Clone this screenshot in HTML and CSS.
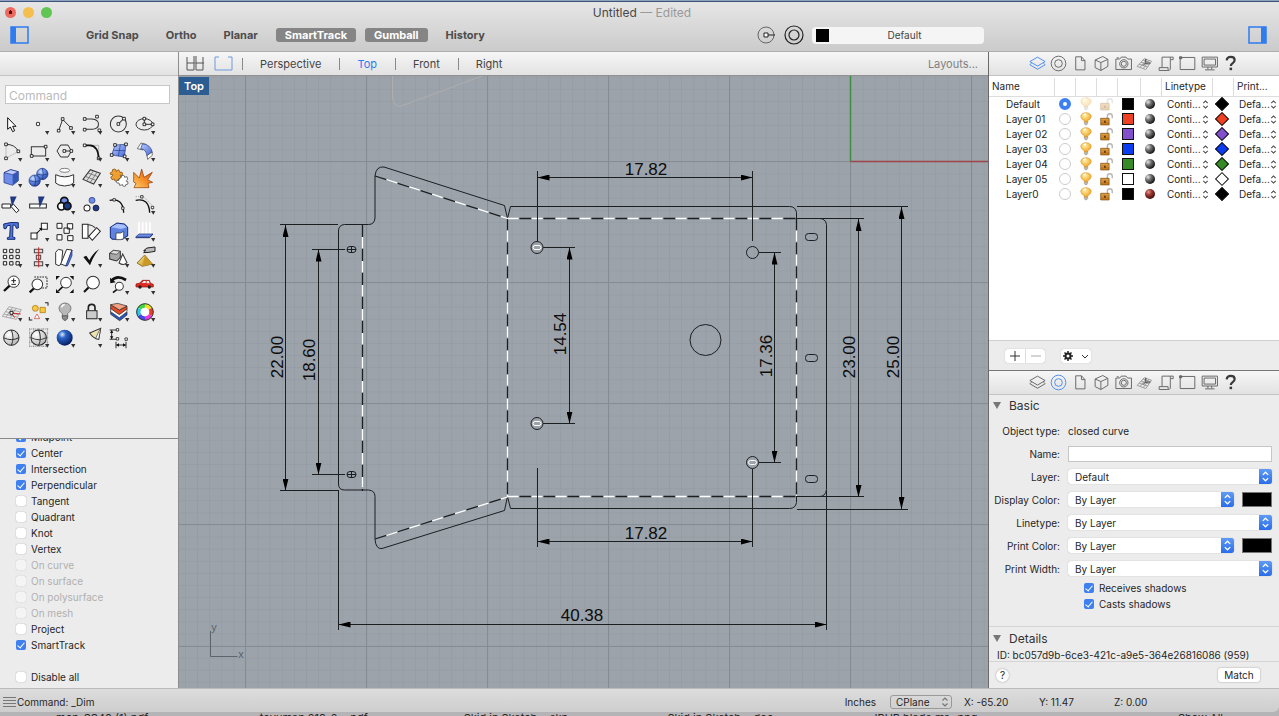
FILE: index.html
```html
<!DOCTYPE html>
<html lang="en">
<head>
    <meta charset="UTF-8">
    <meta name="viewport" content="width=device-width, initial-scale=1.0">
    <title>Untitled</title>
    <link rel="stylesheet" href="styles.css">
</head>
<body>

    <!-- Shared symbols -->
    <svg class="defs" width="0" height="0" aria-hidden="true">
        <defs>
            <linearGradient id="blue" x1="0" y1="0" x2="1" y2="1"><stop offset="0" stop-color="#b9cbff"/><stop offset="1" stop-color="#4468d0"/></linearGradient>
            <linearGradient id="fire" x1="1" y1="0" x2="0" y2="1"><stop offset="0" stop-color="#d8500c"/><stop offset=".5" stop-color="#f58a22"/><stop offset="1" stop-color="#ffd070"/></linearGradient>
            <linearGradient id="gold" x1="0" y1="0" x2="1" y2="1"><stop offset="0" stop-color="#ffe88a"/><stop offset="1" stop-color="#b98a1a"/></linearGradient>
            <radialGradient id="ball" cx=".35" cy=".3" r=".75"><stop offset="0" stop-color="#cfe0ff"/><stop offset=".4" stop-color="#6d95e8"/><stop offset="1" stop-color="#2748a8"/></radialGradient>
            <radialGradient id="deep" cx=".35" cy=".3" r=".75"><stop offset="0" stop-color="#e0ecff"/><stop offset=".3" stop-color="#2c66c8"/><stop offset="1" stop-color="#031a5c"/></radialGradient>
            <radialGradient id="grey" cx=".35" cy=".3" r=".75"><stop offset="0" stop-color="#fff"/><stop offset="1" stop-color="#b5b5b5"/></radialGradient>
            <radialGradient id="dark" cx=".3" cy=".3" r=".75"><stop offset="0" stop-color="#e8e8e8"/><stop offset=".4" stop-color="#777"/><stop offset="1" stop-color="#111"/></radialGradient>
            <radialGradient id="red" cx=".35" cy=".3" r=".75"><stop offset="0" stop-color="#e59a90"/><stop offset=".4" stop-color="#9c3a32"/><stop offset="1" stop-color="#3a0a08"/></radialGradient>
            <radialGradient id="glow" cx=".4" cy=".3" r=".7"><stop offset="0" stop-color="#fff0a8"/><stop offset="1" stop-color="#f0a020"/></radialGradient>
        </defs>
        <symbol id="more" viewBox="0 0 80 80"><path d="M54 57h13l-6 11z" fill="#333"/></symbol>
        <symbol id="n" viewBox="0 0 10 10" overflow="visible"><path d="M1 1h8v8h-8z" fill="#fff" stroke="#111" stroke-width="2.5"/></symbol>
        <symbol id="updown" viewBox="0 0 8 12"><path d="M1.500 4.500L4 2l2.500 2.500M1.500 7.500L4 10l2.500-2.500" fill="none" stroke="currentColor" stroke-width="1.200"/></symbol>
        <symbol id="bulb" viewBox="0 0 36 40"><path d="M3 13a15 11 0 1 1 30 0q0 6-10 12v4h-10v-4q-10-6-10-12z" fill="url(#glow)" stroke="#d08a18" stroke-width="1.500"/><path d="M13 29h10v4l-3 4h-4l-3-4z" fill="#bcb7ae" stroke="#8d8778"/><path d="M11 9q2-3 7-3" stroke="#fff" stroke-width="3" fill="none"/></symbol>
        <symbol id="lock" viewBox="0 0 40 40"><path d="M21 20v-8q0-7 7-7t7 7v6" fill="none" stroke="#b6b6b6" stroke-width="4"/><path d="M2 18h24v19H2z" fill="#c67c1e" stroke="#7d4a0c" stroke-width="2"/><path d="M3 21h22M3 26h22" stroke="#e8b060" stroke-width="2"/><path d="M12 25h4v6h-4z" fill="#3c2204"/></symbol>

        <!-- Panel tabs -->
        <symbol id="t-layers" viewBox="0 0 66 66"><path d="M9 27L33 13l24 14-24 14z"/><path d="M14 32l-5 5 24 14 24-14-5-5"/></symbol>
        <symbol id="t-target" viewBox="0 0 66 66"><circle cx="33" cy="33" r="23"/><circle cx="33" cy="33" r="12"/></symbol>
        <symbol id="t-page" viewBox="0 0 66 66"><path d="M18 12h18l11 12v29H18zM36 12v12h11"/></symbol>
        <symbol id="t-box" viewBox="0 0 66 66"><path d="M13 22l24-11 16 9v22L31 55l-18-9zM13 22l18 8 22-10M31 30v25"/></symbol>
        <symbol id="t-camera" viewBox="0 0 66 66"><path d="M9 19h12l5-6h15l5 6h12v33H9zM12 15h6"/><circle cx="34" cy="34" r="13"/><circle cx="34" cy="34" r="8"/></symbol>
        <symbol id="t-ground" viewBox="0 0 66 66"><path d="M10 42l22-24 23 8-18 26zM16 35l27 9M22 29l25 8M28 22l24 9M20 44l20-24M30 48l17-25" stroke="#999"/><path d="M37 18v14h14M37 32l-8 6" stroke="#444"/></symbol>
        <symbol id="t-scroll" viewBox="0 0 66 66"><path d="M19 45V13h35v8h-9v30q-2 5-8 4H10v-9h28v8M45 13v8"/></symbol>
        <symbol id="t-sheet" viewBox="0 0 66 66"><path d="M10 14h46v38H10z"/><path d="M8 12h7v6H8z" fill="currentColor"/></symbol>
        <symbol id="t-screen" viewBox="0 0 66 66"><path d="M10 13h48v31H10zM16 19h36v19H16zM28 44v8M40 44v8M19 53h30"/></symbol>
        <symbol id="t-help" viewBox="0 0 66 66"><path d="M21 23q1-11 13-11 12 0 12 10 0 6-6 10-6 4-6 9" stroke="#3a3a3a" stroke-width="7"/><path d="M30 46h8v8h-8z" fill="#3a3a3a" stroke="none"/></symbol>
    </svg>

    <div class="desktop-edge"></div>

    <header class="titlebar">
        <div class="title-row">
            <div class="lights"><span class="light close"></span><span class="light minimize"></span><span class="light zoom"></span></div>
            <h1 class="title">Untitled <span>— Edited</span></h1>
        </div>
        <div class="toolbar">
            <button class="side-toggle" aria-label="Left sidebar"><svg width="19" height="18"><path d="M1 1h17v16H1z" fill="none" stroke="#2f7bf0" stroke-width="1.500"/><path d="M1 1h5v16H1z" fill="#2f7bf0"/></svg></button>
            <nav class="modes">
                <button class="mode">Grid Snap</button>
                <button class="mode">Ortho</button>
                <button class="mode">Planar</button>
                <button class="mode on">SmartTrack</button>
                <button class="mode on">Gumball</button>
                <button class="mode">History</button>
            </nav>
            <div class="current">
                <svg width="19" height="18"><circle cx="9" cy="9" r="8" fill="none" stroke="#666"/><path d="M9 9h9" stroke="#222"/><path d="M7 7h4v4H7z" fill="#fff" stroke="#222"/></svg>
                <svg width="20" height="20"><circle cx="10" cy="10" r="9" fill="none" stroke="#222" stroke-width="1.200"/><circle cx="10" cy="10" r="5" fill="none" stroke="#222" stroke-width="1.200"/></svg>
                <button class="layer-field"><span class="swatch"></span><span class="layer-name">Default</span></button>
            </div>
            <div class="toolbar-end">
                <button class="side-toggle" aria-label="Right sidebar"><svg width="19" height="18"><path d="M1 1h17v16H1z" fill="none" stroke="#2f7bf0" stroke-width="1.500"/><path d="M13 1h5v16h-5z" fill="#2f7bf0"/></svg></button>
            </div>
        </div>
    </header>

    <main class="workspace">

        <!-- Left sidebar -->
        <aside class="left">
            <div class="bar"></div>
            <div class="command"><input type="text" placeholder="Command" aria-label="Command"></div>
            <div class="tools">
                <!-- row 1 -->
                <button aria-label="Select"><svg viewBox="0 0 80 80"><path d="M23 17v35l8-7 7 14 6-3-6-13h10z" fill="#fff" stroke="#111" stroke-width="3"/></svg></button>
                <button aria-label="Point"><svg viewBox="0 0 80 80"><circle cx="33" cy="36" r="5" fill="#fff" stroke="#333" stroke-width="3"/><use href="#more"/></svg></button>
                <button aria-label="Polyline"><svg viewBox="0 0 80 80"><path d="M17 56L29 22l25 26" class="ln"/><use href="#n" x="12" y="51" width="10" height="10"/><use href="#n" x="24" y="16" width="10" height="10"/><use href="#n" x="49" y="43" width="10" height="10"/><use href="#more"/></svg></button>
                <button aria-label="Curve"><svg viewBox="0 0 80 80"><path d="M14 21h22c26 2 26 29 0 31H14" class="ln"/><use href="#n" x="9" y="16" width="10" height="10"/><use href="#n" x="46" y="9" width="10" height="10"/><use href="#n" x="9" y="48" width="10" height="10"/><use href="#n" x="53" y="50" width="10" height="10"/><use href="#more"/></svg></button>
                <button aria-label="Circle"><svg viewBox="0 0 80 80"><circle cx="34" cy="36" r="24" class="ln"/><path d="M34 36l16-16" class="ln"/><use href="#n" x="29" y="31" width="10" height="10"/><use href="#n" x="46" y="15" width="10" height="10"/><use href="#more"/></svg></button>
                <button aria-label="Ellipse"><svg viewBox="0 0 80 80"><ellipse cx="34" cy="37" rx="25" ry="17" class="ln"/><path d="M34 20v17h25" class="ln"/><use href="#n" x="29" y="32" width="10" height="10"/><use href="#n" x="29" y="15" width="10" height="10"/><use href="#n" x="54" y="32" width="10" height="10"/><use href="#more"/></svg></button>
                <!-- row 2 -->
                <button aria-label="Arc"><svg viewBox="0 0 80 80"><path d="M18 16v42l37-21" stroke="#888" fill="none" stroke-width="2" stroke-dasharray="4 2"/><path d="M18 16q27 0 37 21" class="ln"/><use href="#n" x="13" y="11" width="10" height="10"/><use href="#n" x="50" y="32" width="10" height="10"/><use href="#n" x="13" y="53" width="10" height="10"/><use href="#more"/></svg></button>
                <button aria-label="Rectangle"><svg viewBox="0 0 80 80"><path d="M13 23h43v28H13z" class="ln"/><use href="#n" x="9" y="46" width="10" height="10"/><use href="#n" x="51" y="18" width="10" height="10"/><use href="#more"/></svg></button>
                <button aria-label="Polygon"><svg viewBox="0 0 80 80"><path d="M12 36l11-18h22l10 18-10 18H23z" class="ln"/><path d="M34 36h20" class="ln"/><use href="#n" x="29" y="31" width="10" height="10"/><use href="#n" x="50" y="31" width="10" height="10"/><use href="#more"/></svg></button>
                <button aria-label="Fillet"><svg viewBox="0 0 80 80"><path d="M14 19h42v40" fill="none" stroke="#999" stroke-width="2"/><path d="M14 19h16q24 2 26 38" fill="none" stroke="#111" stroke-width="5"/><use href="#n" x="9" y="14" width="10" height="10"/><use href="#n" x="51" y="53" width="10" height="10"/><use href="#more"/></svg></button>
                <button aria-label="Surface"><svg viewBox="0 0 80 80"><path d="M24 18l33-2-5 38-38-6z" fill="url(#blue)" stroke="#223a8c" stroke-width="2"/><path d="M19 34l36 1M40 17l-6 35" stroke="#223a8c" stroke-width="2"/><use href="#n" x="19" y="13" width="10" height="10"/><use href="#n" x="52" y="11" width="10" height="10"/><use href="#n" x="48" y="47" width="10" height="10"/><use href="#n" x="9" y="43" width="10" height="10"/><use href="#more"/></svg></button>
                <button aria-label="Sweep"><svg viewBox="0 0 80 80"><path d="M13 29l11-17 15 4-9 17z" fill="#fff" stroke="#333" stroke-width="2"/><path d="M28 15q24 0 30 25l-16 11q-3-22-19-21z" fill="url(#blue)" stroke="#223a8c" stroke-width="2"/><path d="M42 50l15-11 1 10-14 12z" fill="#fff" stroke="#333" stroke-width="2"/><use href="#more"/></svg></button>
                <!-- row 3 -->
                <button aria-label="Box"><svg viewBox="0 0 80 80"><path d="M12 23l20-9 23 6v27L38 61l-26-8z" fill="#6f8de8" stroke="#1b2d78" stroke-width="2"/><path d="M12 23l20-9 23 6-17 9z" fill="#b9cbff" stroke="#1b2d78" stroke-width="2"/><path d="M38 29l17-9v27L38 61z" fill="#3456b4"/><use href="#more"/></svg></button>
                <button aria-label="Boolean"><svg viewBox="0 0 80 80"><circle cx="46" cy="27" r="17" fill="url(#ball)" stroke="#1b2d78" stroke-width="2"/><circle cx="23" cy="47" r="17" fill="url(#ball)" stroke="#1b2d78" stroke-width="2"/><path d="M30 27q16 7 32 0M46 10q6 17 0 34M7 47q16 7 32 0M23 31q6 16 0 32" fill="none" stroke="#1b2d78" stroke-width="2"/><use href="#more"/></svg></button>
                <button aria-label="Extrude"><svg viewBox="0 0 80 80"><ellipse cx="35" cy="16" rx="15" ry="6" fill="#fff" stroke="#444" stroke-width="2"/><path d="M8 29q27 13 54 0v25l-10 6q-17 6-34 0l-10-6z" fill="#fafafa" stroke="#333" stroke-width="3"/><use href="#more"/></svg></button>
                <button aria-label="Mesh"><svg viewBox="0 0 80 80"><path d="M9 43l22-29 30 11-20 32z" fill="#ddd" stroke="#333" stroke-width="3"/><path d="M16 34l31 12M24 24l30 11M20 48l20-30M31 52l20-30" stroke="#555" stroke-width="2"/><use href="#more"/></svg></button>
                <button aria-label="Plugins"><svg viewBox="0 0 80 80"><path d="M9 24l7-4q-2-8 6-8 7 1 5 7l8-5 4 8q8-3 8 4t-8 5l3 7-8 4q1 7-6 7t-5-7l-8 2-4-8q8-2 6-7-3-2-5 1z" fill="#f0a030" stroke="#6e4305" stroke-width="2"/><path d="M36 42l7-5q-1-7 5-6t5 6l7-2 2 8q-7 4-3 7l3-1 1 8-7 2q1 6-5 5t-4-5l-9 2-2-7q-8 2-8-4t8-4z" fill="#fff" stroke="#333" stroke-width="2"/></svg></button>
                <button aria-label="Explode"><svg viewBox="0 0 80 80"><path d="M2 22l17 17L26 12l7 25 25-15-14 22 15 8-14 3 3 13H3l6-13-7-4z" fill="url(#fire)" stroke="#8c3400" stroke-width="2"/></svg></button>
                <!-- row 4 -->
                <button aria-label="Trim"><svg viewBox="0 0 80 80"><path d="M6 36h26v12H6zM32 42l8-6 17 19-8 7z" fill="#fff" stroke="#222" stroke-width="3"/><path d="M31 14h18L36 42z" fill="#1e3a8a" stroke="#101c50"/></svg></button>
                <button aria-label="Split"><svg viewBox="0 0 80 80"><path d="M8 36h50v12H8z" fill="#fff" stroke="#222" stroke-width="3"/><path d="M34 14h18L38 46z" fill="#1e3a8a" stroke="#101c50"/></svg></button>
                <button aria-label="Group"><svg viewBox="0 0 80 80"><circle cx="34" cy="27" r="11" fill="#6f8de8" stroke="#111" stroke-width="5"/><circle cx="25" cy="43" r="11" fill="#fff" stroke="#111" stroke-width="5"/><circle cx="43" cy="42" r="11" fill="#1e3a8a" stroke="#111" stroke-width="5"/><use href="#more"/></svg></button>
                <button aria-label="Ungroup"><svg viewBox="0 0 80 80"><circle cx="36" cy="25" r="9" fill="#6f8de8" stroke="#1b2d78" stroke-width="2"/><circle cx="21" cy="48" r="9" fill="#fff" stroke="#222" stroke-width="3"/><circle cx="48" cy="48" r="9" fill="#1e3a8a" stroke="#111" stroke-width="2"/></svg></button>
                <button aria-label="Edit points"><svg viewBox="0 0 80 80"><path d="M8 25q40-8 42 37" fill="none" stroke="#111" stroke-width="4"/><use href="#n" x="17" y="19" width="9" height="9"/><use href="#n" x="43" y="44" width="9" height="9"/></svg></button>
                <button aria-label="Control points"><svg viewBox="0 0 80 80"><path d="M8 14h24l27 28v20" fill="none" stroke="#888" stroke-width="2" stroke-dasharray="4 3"/><path d="M8 25q40-8 42 37" fill="none" stroke="#111" stroke-width="4"/><use href="#n" x="22" y="10" width="9" height="9"/><use href="#n" x="54" y="42" width="9" height="9"/><use href="#more"/></svg></button>
                <!-- row 5 -->
                <button aria-label="Text"><svg viewBox="0 0 80 80"><path d="M11 15q21-7 44-4v16l-6 1-3-9-7-1-1 36 7 2v5H22v-5l7-2 2-35-9 1-4 9h-6z" fill="#5277d6" stroke="#142a78" stroke-width="3"/></svg></button>
                <button aria-label="Move"><svg viewBox="0 0 80 80"><path d="M12 42h18v18H12zM43 13h18v18H43z" fill="#fff" stroke="#222" stroke-width="3"/><path d="M29 43l13-13" stroke="#111" stroke-width="3"/><path d="M46 26l-10 2 8 8z" fill="#111"/><use href="#more"/></svg></button>
                <button aria-label="Copy"><svg viewBox="0 0 80 80"><path d="M12 13h15v15H12zM43 14h16v16H43zM33 27h16v16H33zM12 47h15v16H12zM44 50h16v15H44z" fill="#fff" stroke="#222" stroke-width="3"/></svg></button>
                <button aria-label="Rotate"><svg viewBox="0 0 80 80"><path d="M7 16h17v42H7zM26 52l24-26 11 11-24 27z" fill="#fff" stroke="#222" stroke-width="3"/><path d="M24 17q13 0 22 10" class="ln"/></svg></button>
                <button aria-label="Solid edit"><svg viewBox="0 0 80 80"><path d="M10 25l20-13 22 3 10 10v25L46 61H16l-6-6z" fill="#5f83e0" stroke="#142a78" stroke-width="3"/><path d="M12 25l18-11 21 3 9 8-18 5z" fill="#a9c0ff"/><path d="M27 42h14l9-5v22l-9 3H27z" fill="#fff" stroke="#222" stroke-width="2"/><use href="#more"/></svg></button>
                <button aria-label="Project"><svg viewBox="0 0 80 80"><path d="M18 10v30M29 10v30M40 10v30M51 10v30" stroke="#fff" stroke-width="5"/><path d="M18 46l-5-8h10zM29 46l-5-8h10zM40 46l-5-8h10zM51 46l-5-8h10z" fill="#fff"/><path d="M8 54l10-9h42l-10 9z" fill="#6e8fe6" stroke="#1b2d78" stroke-width="2"/><path d="M8 56h42l10-11" fill="none" stroke="#1b2d78" stroke-width="3"/><use href="#more"/></svg></button>
                <!-- row 6 -->
                <button aria-label="Array"><svg viewBox="0 0 80 80"><path d="M10 13h10v10H10zM29 13h10v10H29zM48 13h10v10H48zM10 31h10v10H10zM29 31h10v10H29zM48 31h10v10H48zM10 50h10v10H10zM29 50h10v10H29zM48 50h10v10H48z" fill="#fff" stroke="#222" stroke-width="3"/><use href="#more"/></svg></button>
                <button aria-label="Align"><svg viewBox="0 0 80 80"><path d="M22 13h25v10H22zM28 31h13v12H28zM22 50h25v12H22z" fill="#ddd" stroke="#444" stroke-width="3"/><path d="M35 7v60" stroke="#d02020" stroke-width="3"/><use href="#more"/></svg></button>
                <button aria-label="Orient"><svg viewBox="0 0 80 80"><path d="M8 22l8-9 13 3-3 40-8 6-10-4z" fill="#fff" stroke="#333" stroke-width="3"/><path d="M41 13l16 2-17 48-17-6z" fill="#fff" stroke="#333" stroke-width="3"/><path d="M57 15v17L44 62l-6 1z" fill="#4c76d8" stroke="#1b2d78" stroke-width="2"/><use href="#more"/></svg></button>
                <button aria-label="Check"><svg viewBox="0 0 80 80"><path d="M10 36l9-4 9 14Q40 22 58 12 40 32 30 61z" fill="#111"/><use href="#more"/></svg></button>
                <button aria-label="Solids"><svg viewBox="0 0 80 80"><path d="M8 25l12-9 20 3v18L29 48 8 42z" fill="#a8a8a8" stroke="#333" stroke-width="3"/><path d="M8 25l12-9 20 3-11 9z" fill="#ddd" stroke="#333" stroke-width="2"/><path d="M47 27l13 26q-10 10-24 1z" fill="#fff" stroke="#333" stroke-width="3"/><use href="#more"/></svg></button>
                <button aria-label="Cap"><svg viewBox="0 0 80 80"><path d="M12 54l23-24 23 27-30 7z" fill="url(#gold)" stroke="#5c4205" stroke-width="2"/><path d="M35 30l-7 34 30-7z" fill="#c99a28"/><path d="M32 17l10-8 24-3v13l-18 3-16 1 6-6z" fill="#bbb" stroke="#222" stroke-width="3"/><use href="#more"/></svg></button>
                <!-- row 7 -->
                <button aria-label="Zoom in"><svg viewBox="0 0 80 80"><path d="M12 57l17-16" stroke="#111" stroke-width="7"/><circle cx="41" cy="29" r="17" fill="#fff" stroke="#333" stroke-width="3"/><path d="M34 26h14M41 19v14M34 37h14" stroke="#222" stroke-width="3"/></svg></button>
                <button aria-label="Zoom window"><svg viewBox="0 0 80 80"><path d="M22 15h38v33H38" fill="none" stroke="#222" stroke-width="3" stroke-dasharray="5 3"/><path d="M8 61l14-13" stroke="#111" stroke-width="7"/><circle cx="31" cy="37" r="16" fill="#fff" stroke="#333" stroke-width="3"/></svg></button>
                <button aria-label="Zoom extents"><svg viewBox="0 0 80 80"><path d="M9 12h12L9 24zM62 12H50l12 12zM9 63h12L9 51zM62 63H50l12-12z" fill="#111"/><path d="M16 57l14-14" stroke="#111" stroke-width="5"/><circle cx="39" cy="32" r="16" fill="#fff" stroke="#333" stroke-width="3"/></svg></button>
                <button aria-label="Zoom"><svg viewBox="0 0 80 80"><path d="M12 60l16-16" stroke="#111" stroke-width="6"/><circle cx="39" cy="32" r="19" fill="#fff" stroke="#333" stroke-width="3"/></svg></button>
                <button aria-label="Undo view"><svg viewBox="0 0 80 80"><path d="M14 26Q30 8 57 24" fill="none" stroke="#111" stroke-width="8"/><path d="M9 17l1 17 16-3z" fill="#111"/><path d="M18 62l12-10" stroke="#111" stroke-width="5"/><circle cx="37" cy="43" r="12" fill="#fff" stroke="#333" stroke-width="3"/><use href="#more"/></svg></button>
                <button aria-label="Named view"><svg viewBox="0 0 80 80"><path d="M9 36l12-3 7-8h21l4 9 8 3v8H9z" fill="#e02c24" stroke="#8c1008" stroke-width="2"/><path d="M27 33l5-6h6v6zM41 27h6l3 7h-9z" fill="#fff"/><circle cx="21" cy="45" r="5" fill="#222"/><circle cx="49" cy="45" r="5" fill="#222"/><use href="#more"/></svg></button>
                <!-- row 8 -->
                <button aria-label="Construction plane"><svg viewBox="0 0 80 80"><path d="M7 52l20-29 37 9-15 29zM17 38l38 9M22 30l37 8M12 45l40 9M18 54l20-29M31 57l17-29" fill="none" stroke="#888" stroke-width="2"/><path d="M34 42l28 3M34 42l10 14" stroke="#d02020" stroke-width="3"/><use href="#n" x="29" y="36" width="11" height="11"/><use href="#more"/></svg></button>
                <button aria-label="Select objects"><svg viewBox="0 0 80 80"><path d="M54 11h9v9M7 54v9h9" fill="none" stroke="#222" stroke-width="3"/><circle cx="25" cy="28" r="9" fill="#f8c840" stroke="#a06c08" stroke-width="2"/><path d="M39 25h16v16H39z" fill="#f8c840" stroke="#a06c08" stroke-width="2"/><path d="M30 45l8 14H22z" fill="#fff" stroke="#c83030" stroke-width="2"/><use href="#more"/></svg></button>
                <button aria-label="Hide"><svg viewBox="0 0 80 80"><path d="M18 28a18 16 0 1 1 36 0q0 9-10 16v9H28v-9q-10-7-10-16z" fill="#b8b8b8" stroke="#555" stroke-width="2"/><path d="M28 50h16v8l-5 6h-6l-5-6z" fill="#888" stroke="#444" stroke-width="2"/><path d="M26 25q1-7 9-8" stroke="#fff" stroke-width="4" fill="none"/><use href="#more"/></svg></button>
                <button aria-label="Lock"><svg viewBox="0 0 80 80"><path d="M25 36V26q0-10 10-10t10 10v10" fill="none" stroke="#222" stroke-width="5"/><path d="M20 35h31v24H20z" fill="#ddd" stroke="#222" stroke-width="3"/><path d="M22 42h27M22 48h27M22 54h27" stroke="#aaa" stroke-width="2"/><use href="#more"/></svg></button>
                <button aria-label="Layers"><svg viewBox="0 0 80 80"><path d="M11 36l24 17 25-14v9L38 65 11 46z" fill="#2858c0" stroke="#222" stroke-width="2"/><path d="M11 27l25 16 24-14v9L37 56 11 38z" fill="#fff" stroke="#222" stroke-width="2"/><path d="M11 17l26 16 23-12v9L37 47 11 29z" fill="#e04a26" stroke="#222" stroke-width="2"/><path d="M11 17l21-4 28 8-23 12z" fill="#f2a282" stroke="#222" stroke-width="2"/><use href="#more"/></svg></button>
                <button aria-label="Color"><svg viewBox="0 0 80 80"><g fill="none" stroke-width="12"><path d="M36 20a19 19 0 0 1 16 9" stroke="#f0e020"/><path d="M52 29a19 19 0 0 1 0 19" stroke="#f03a28"/><path d="M52 48a19 19 0 0 1-16 10" stroke="#e838d8"/><path d="M36 58a19 19 0 0 1-17-10" stroke="#4848f0"/><path d="M19 48a19 19 0 0 1 0-19" stroke="#28c8e8"/><path d="M19 29a19 19 0 0 1 17-9" stroke="#40d840"/></g><circle cx="36" cy="39" r="13" fill="#fff"/><circle cx="36" cy="39" r="25" class="ln"/><use href="#more"/></svg></button>
                <!-- row 9 -->
                <button aria-label="Shade"><svg viewBox="0 0 80 80"><circle cx="34" cy="38" r="23" fill="url(#grey)" stroke="#222" stroke-width="3"/><path d="M34 15q10 24 0 46M11 38q23 12 46 0" class="ln"/></svg></button>
                <button aria-label="Shade grid"><svg viewBox="0 0 80 80"><path d="M6 12h58M6 24h58M6 38h58M6 52h58M6 64h58M8 10v56M20 10v56M34 10v56M48 10v56M61 10v56" stroke="#777" stroke-width="2" stroke-dasharray="4 2"/><circle cx="35" cy="38" r="23" fill="url(#grey)" stroke="#222" stroke-width="3"/><path d="M35 15q10 24 0 46M12 38q23 12 46 0" class="ln"/><use href="#more"/></svg></button>
                <button aria-label="Render"><svg viewBox="0 0 80 80"><circle cx="35" cy="38" r="24" fill="url(#deep)"/><use href="#more"/></svg></button>
                <button aria-label="Light"><svg viewBox="0 0 80 80"><path d="M29 24l33-14-6 33q-16-2-27-19z" fill="#eee3b0" stroke="#333" stroke-width="3"/><path d="M56 20l-9 20 9 3 6-33z" fill="#fff" stroke="#333" stroke-width="2"/><use href="#more"/></svg></button>
                <button aria-label="Dimension"><svg viewBox="0 0 80 80"><path d="M8 15h21M8 43h21M14 17v25M27 50v20M57 50v20M29 60h26" class="ln"/><path d="M14 15l-5 9h10zM14 43l-5-9h10zM27 60l9-5v10zM57 60l-9-5v10z" fill="#111"/><use href="#n" x="27" y="10" width="9" height="9"/><use href="#n" x="27" y="37" width="9" height="9"/><use href="#n" x="53" y="38" width="9" height="9"/></svg></button>
            </div>

            <div class="snaps">
                <div class="snap-list">
                    <label><input type="checkbox" checked>Midpoint</label>
                    <label><input type="checkbox" checked>Center</label>
                    <label><input type="checkbox" checked>Intersection</label>
                    <label><input type="checkbox" checked>Perpendicular</label>
                    <label><input type="checkbox">Tangent</label>
                    <label><input type="checkbox">Quadrant</label>
                    <label><input type="checkbox">Knot</label>
                    <label><input type="checkbox">Vertex</label>
                    <label class="off"><input type="checkbox" disabled>On curve</label>
                    <label class="off"><input type="checkbox" disabled>On surface</label>
                    <label class="off"><input type="checkbox" disabled>On polysurface</label>
                    <label class="off"><input type="checkbox" disabled>On mesh</label>
                    <label><input type="checkbox">Project</label>
                    <label><input type="checkbox" checked>SmartTrack</label>
                    <label class="disable-all"><input type="checkbox">Disable all</label>
                </div>
            </div>
        </aside>

        <!-- Drawing area -->
        <section class="center">
            <nav class="bar viewbar">
                <button aria-label="Four views"><svg width="19" height="17"><path d="M1 2v13h7V1M17 2v13h-7V1M1 8h17" fill="none" stroke="#555"/><path d="M9 2v12" stroke="#999"/></svg></button>
                <button aria-label="Single view"><svg width="19" height="17"><path d="M1 2v13h17V2M1 2h4M14 2h4" fill="none" stroke="#6e9ae0"/></svg></button>
                <i class="sep"></i>
                <a href="#">Perspective</a><i class="sep"></i>
                <a href="#" class="on">Top</a><i class="sep"></i>
                <a href="#">Front</a><i class="sep"></i>
                <a href="#">Right</a>
                <a href="#" class="layouts">Layouts...</a>
            </nav>
            <div class="viewport">
                <span class="view-label">Top</span>
                <svg class="drawing" viewBox="179 76 809 612" preserveAspectRatio="xMidYMid slice">
                    <defs>
                        <pattern id="minor" x="850.500" y="161.500" width="12.100" height="12.100" patternUnits="userSpaceOnUse"><path d="M0 0v12.100M0 0h12.100" stroke="#7f878f" stroke-width="1"/></pattern>
                        <marker id="arrow" viewBox="0 0 12 6" refX="12" refY="3" markerWidth="12" markerHeight="6" markerUnits="userSpaceOnUse" orient="auto-start-reverse"><path d="M0 0l12 3-12 3z" fill="#000"/></marker>
                    </defs>
                    <rect x="179" y="76" width="809" height="612" fill="#9ca3ab"/>
                    <rect x="179" y="76" width="809" height="612" fill="url(#minor)" opacity=".4"/>
                    <path d="M245.500 76v612M366.500 76v612M487.500 76v612M608.500 76v612M729.500 76v612M850.500 76v612M971.500 76v612M179 161.500h809M179 282.500h809M179 403.500h809M179 524.500h809M179 646.500h809" stroke="#848c94"/>
                    <path d="M392.500 76v22q2 10 9 8l83-31" fill="none" stroke="#b0aeae"/>
                    <path d="M850.500 76v85.500" stroke="#3d8f42" stroke-width="1.500"/>
                    <path d="M850.500 161.500h138" stroke="#a0464a" stroke-width="1.500"/>

                    <!-- sheet outline -->
                    <g class="curve">
                        <path d="M338.500 231q0-6 6-6.500h24q6 0 6.500-6.500v-42q1-10 9-9l120.500 38.500 3 13 3-12h279q6 0 7 6v6h23q6 0 7 6v265q-1 7-7 7h-23v6q-1 6-7 6h-279l-3-12-3 14-122.500 38q-6 1-7-9v-43q0-6-6.500-6.500h-24q-6 0-6-6z"/>
                        <circle cx="537" cy="247.500" r="6"/><circle cx="537" cy="423.500" r="6"/>
                        <circle cx="752.500" cy="252.500" r="6"/><circle cx="752.500" cy="462.500" r="6"/>
                        <circle cx="705.500" cy="340" r="15.500"/>
                        <rect x="805.500" y="233.500" width="12" height="7" rx="3"/><rect x="805.500" y="354.500" width="12" height="7" rx="3"/><rect x="805.500" y="475.500" width="12" height="7" rx="3"/>
                        <rect x="347" y="246.500" width="9" height="6" rx="3"/><path d="M347 249.500h9M351.500 246.500v6"/>
                        <rect x="347" y="471.500" width="9" height="6" rx="3"/><path d="M347 474.500h9M351.500 471.500v6"/>
                    </g>
                    <g class="slot">
                        <rect x="533" y="245.500" width="8" height="4" rx="2"/><rect x="533" y="421.500" width="8" height="4" rx="2"/><rect x="748.500" y="460.500" width="8" height="4" rx="2"/>
                    </g>
                    <!-- fold lines -->
                    <path class="fold dark" d="M362.500 225v266M507.500 218.500v278.500M796.500 218.500v278.500M375 176l132.500 42.500M375 539l132.500-42M519.500 218.500h277M519.500 496.500h277"/>
                    <path class="fold light" d="M362.500 237v250M507.500 230.500v266M796.500 230.500v266M386.500 179.500l121 39M386.500 535.500l121-38.500M507.500 218.500h277M507.500 496.500h277"/>

                    <!-- dimensions -->
                    <g class="curve">
                        <path d="M537.500 171v70M752.500 171v70M537.500 468v79M752.500 469v78M338.500 490v140M826.500 490v140M280 224.500h58M280 490.500h58M312 249.500h33M312 474.500h33M543 247.500h32M543 423.500h32M759 252.500h22M759 462.500h22M796 218.500h68M796 496.500h68M797 206.500h111M797 509.500h111"/>
                        <g marker-start="url(#arrow)" marker-end="url(#arrow)">
                            <path d="M537.500 177.500h215"/><path d="M537.500 541.500h215"/><path d="M338.500 624.500h488"/>
                            <path d="M285.500 225v265.500"/><path d="M318.500 249.500v225"/><path d="M569.500 247.500v176"/>
                            <path d="M774.500 252.500v210"/><path d="M858.500 219v278"/><path d="M901.500 207v302"/>
                        </g>
                    </g>
                    <g class="dim">
                        <text x="646" y="175">17.82</text><text x="646" y="539">17.82</text><text x="582" y="621">40.38</text>
                        <text transform="translate(283 357) rotate(-90)">22.00</text>
                        <text transform="translate(315 360) rotate(-90)">18.60</text>
                        <text transform="translate(566 334) rotate(-90)">14.54</text>
                        <text transform="translate(772 356) rotate(-90)">17.36</text>
                        <text transform="translate(855 357) rotate(-90)">23.00</text>
                        <text transform="translate(899 357) rotate(-90)">25.00</text>
                    </g>
                    <path d="M210.500 631v25.500h27" fill="none" stroke="#5c646c"/>
                    <g class="axis"><text x="214" y="631">y</text><text x="241" y="658">x</text></g>
                </svg>
            </div>
        </section>

        <!-- Right sidebar -->
        <aside class="right">
            <nav class="bar tabs">
                <button class="on" aria-label="Layers"><svg><use href="#t-layers"/></svg></button>
                <button aria-label="Properties"><svg><use href="#t-target"/></svg></button>
                <button aria-label="Notes"><svg><use href="#t-page"/></svg></button>
                <button aria-label="Display"><svg><use href="#t-box"/></svg></button>
                <button aria-label="Named views"><svg><use href="#t-camera"/></svg></button>
                <button aria-label="Ground plane"><svg><use href="#t-ground"/></svg></button>
                <button aria-label="Script"><svg><use href="#t-scroll"/></svg></button>
                <button aria-label="Sheet"><svg><use href="#t-sheet"/></svg></button>
                <button aria-label="Rendering"><svg><use href="#t-screen"/></svg></button>
                <button aria-label="Help"><svg><use href="#t-help"/></svg></button>
            </nav>

            <div class="layers">
                <table>
                    <colgroup><col class="c-name"><col class="c-s"><col class="c-s"><col class="c-s"><col class="c-m"><col class="c-s"><col class="c-line"><col class="c-s"><col></colgroup>
                    <thead><tr><th>Name</th><th></th><th></th><th></th><th></th><th></th><th>Linetype</th><th></th><th>Print...</th></tr></thead>
                    <tbody>
                        <tr class="current-row">
                            <td>Default</td><td><input type="radio" name="layer" aria-label="Default" checked></td>
                            <td><svg class="ic"><use href="#bulb"/></svg></td><td><svg class="ic"><use href="#lock"/></svg></td>
                            <td><span class="chip black"></span></td><td><svg class="ball"><circle cx="5" cy="5" r="5" fill="url(#dark)"/></svg></td>
                            <td><button class="pick">Conti...<svg><use href="#updown"/></svg></button></td><td><span class="diamond black"></span></td>
                            <td><button class="pick">Defa...<svg><use href="#updown"/></svg></button></td>
                        </tr>
                        <tr>
                            <td>Layer 01</td><td><input type="radio" name="layer" aria-label="Layer 01"></td>
                            <td><svg class="ic"><use href="#bulb"/></svg></td><td><svg class="ic"><use href="#lock"/></svg></td>
                            <td><span class="chip red"></span></td><td><svg class="ball"><circle cx="5" cy="5" r="5" fill="url(#dark)"/></svg></td>
                            <td><button class="pick">Conti...<svg><use href="#updown"/></svg></button></td><td><span class="diamond red"></span></td>
                            <td><button class="pick">Defa...<svg><use href="#updown"/></svg></button></td>
                        </tr>
                        <tr>
                            <td>Layer 02</td><td><input type="radio" name="layer" aria-label="Layer 02"></td>
                            <td><svg class="ic"><use href="#bulb"/></svg></td><td><svg class="ic"><use href="#lock"/></svg></td>
                            <td><span class="chip purple"></span></td><td><svg class="ball"><circle cx="5" cy="5" r="5" fill="url(#dark)"/></svg></td>
                            <td><button class="pick">Conti...<svg><use href="#updown"/></svg></button></td><td><span class="diamond purple"></span></td>
                            <td><button class="pick">Defa...<svg><use href="#updown"/></svg></button></td>
                        </tr>
                        <tr>
                            <td>Layer 03</td><td><input type="radio" name="layer" aria-label="Layer 03"></td>
                            <td><svg class="ic"><use href="#bulb"/></svg></td><td><svg class="ic"><use href="#lock"/></svg></td>
                            <td><span class="chip blue"></span></td><td><svg class="ball"><circle cx="5" cy="5" r="5" fill="url(#dark)"/></svg></td>
                            <td><button class="pick">Conti...<svg><use href="#updown"/></svg></button></td><td><span class="diamond blue"></span></td>
                            <td><button class="pick">Defa...<svg><use href="#updown"/></svg></button></td>
                        </tr>
                        <tr>
                            <td>Layer 04</td><td><input type="radio" name="layer" aria-label="Layer 04"></td>
                            <td><svg class="ic"><use href="#bulb"/></svg></td><td><svg class="ic"><use href="#lock"/></svg></td>
                            <td><span class="chip green"></span></td><td><svg class="ball"><circle cx="5" cy="5" r="5" fill="url(#dark)"/></svg></td>
                            <td><button class="pick">Conti...<svg><use href="#updown"/></svg></button></td><td><span class="diamond green"></span></td>
                            <td><button class="pick">Defa...<svg><use href="#updown"/></svg></button></td>
                        </tr>
                        <tr>
                            <td>Layer 05</td><td><input type="radio" name="layer" aria-label="Layer 05"></td>
                            <td><svg class="ic"><use href="#bulb"/></svg></td><td><svg class="ic"><use href="#lock"/></svg></td>
                            <td><span class="chip white"></span></td><td><svg class="ball"><circle cx="5" cy="5" r="5" fill="url(#dark)"/></svg></td>
                            <td><button class="pick">Conti...<svg><use href="#updown"/></svg></button></td><td><span class="diamond white"></span></td>
                            <td><button class="pick">Defa...<svg><use href="#updown"/></svg></button></td>
                        </tr>
                        <tr>
                            <td>Layer0</td><td><input type="radio" name="layer" aria-label="Layer0"></td>
                            <td><svg class="ic"><use href="#bulb"/></svg></td><td><svg class="ic"><use href="#lock"/></svg></td>
                            <td><span class="chip black"></span></td><td><svg class="ball"><circle cx="5" cy="5" r="5" fill="url(#red)"/></svg></td>
                            <td><button class="pick">Conti...<svg><use href="#updown"/></svg></button></td><td><span class="diamond black"></span></td>
                            <td><button class="pick">Defa...<svg><use href="#updown"/></svg></button></td>
                        </tr>
                    </tbody>
                </table>
            </div>
            <div class="layer-actions">
                <div class="pair">
                    <button aria-label="Add layer"><svg width="12" height="12"><path d="M6 1v10M1 6h10" stroke="#333"/></svg></button>
                    <button aria-label="Remove layer"><svg width="12" height="12"><path d="M1 6h10" stroke="#aaa"/></svg></button>
                </div>
                <button class="gear" aria-label="Layer options">
                    <svg width="10" height="10"><circle cx="5" cy="5" r="2.500" fill="none" stroke="#222" stroke-width="2"/><path d="M5 0v10M0 5h10M1.500 1.500l7 7M8.500 1.500l-7 7" stroke="#222" stroke-width="1.500"/><circle cx="5" cy="5" r="1.500" fill="#fff"/></svg>
                    <svg width="8" height="8"><path d="M1 3l3 3 3-3" fill="none" stroke="#333"/></svg>
                </button>
            </div>

            <section class="props">
                <nav class="bar tabs">
                    <button aria-label="Layers"><svg><use href="#t-layers"/></svg></button>
                    <button class="on" aria-label="Properties"><svg><use href="#t-target"/></svg></button>
                    <button aria-label="Notes"><svg><use href="#t-page"/></svg></button>
                    <button aria-label="Display"><svg><use href="#t-box"/></svg></button>
                    <button aria-label="Named views"><svg><use href="#t-camera"/></svg></button>
                    <button aria-label="Ground plane"><svg><use href="#t-ground"/></svg></button>
                    <button aria-label="Script"><svg><use href="#t-scroll"/></svg></button>
                    <button aria-label="Sheet"><svg><use href="#t-sheet"/></svg></button>
                    <button aria-label="Rendering"><svg><use href="#t-screen"/></svg></button>
                    <button aria-label="Help"><svg><use href="#t-help"/></svg></button>
                </nav>
                <h2><svg width="8" height="7"><path d="M0 0h8L4 7z" fill="#777"/></svg>Basic</h2>
                <div class="form">
                    <span class="lbl">Object type:</span><div class="row">closed curve</div>
                    <label class="lbl" for="name">Name:</label><div class="row"><input id="name" type="text"></div>
                    <label class="lbl" for="layer">Layer:</label><div class="row"><span class="select"><select id="layer"><option>Default</option></select><svg><use href="#updown"/></svg></span></div>
                    <label class="lbl" for="dcolor">Display Color:</label><div class="row"><span class="select"><select id="dcolor"><option>By Layer</option></select><svg><use href="#updown"/></svg></span><button class="well" aria-label="Display color"></button></div>
                    <label class="lbl" for="ltype">Linetype:</label><div class="row"><span class="select"><select id="ltype"><option>By Layer</option></select><svg><use href="#updown"/></svg></span></div>
                    <label class="lbl" for="pcolor">Print Color:</label><div class="row"><span class="select"><select id="pcolor"><option>By Layer</option></select><svg><use href="#updown"/></svg></span><button class="well" aria-label="Print color"></button></div>
                    <label class="lbl" for="pwidth">Print Width:</label><div class="row"><span class="select"><select id="pwidth"><option>By Layer</option></select><svg><use href="#updown"/></svg></span></div>
                </div>
                <div class="shadows">
                    <label><input type="checkbox" checked>Receives shadows</label>
                    <label><input type="checkbox" checked>Casts shadows</label>
                </div>
                <h2 class="details"><svg width="8" height="7"><path d="M0 0h8L4 7z" fill="#777"/></svg>Details</h2>
                <p class="object-id">ID: bc057d9b-6ce3-421c-a9e5-364e26816086 (959)</p>
                <div class="props-footer">
                    <button class="help">?</button>
                    <button class="match">Match</button>
                </div>
            </section>
        </aside>
    </main>

    <footer class="status">
        <svg class="grip" width="13" height="10"><path d="M0 .500h13M0 3.500h13M0 6.500h13M0 9.500h13" stroke="#777"/></svg>
        <span class="prompt">Command: _Dim</span>
        <span class="units">Inches</span>
        <span class="plane"><select aria-label="Coordinate system"><option>CPlane</option></select><svg><use href="#updown"/></svg></span>
        <span class="coord">X: -65.20</span>
        <span class="coord">Y: 11.47</span>
        <span class="coord">Z: 0.00</span>
    </footer>

    <!-- Downloads bar of the window behind -->
    <div class="downloads">
        <span>mon-SS40 (1).pdf</span>
        <span>toyuman 218_2....pdf</span>
        <span>Skid in Sketch....skp</span>
        <span>Skid in Sketch....doc</span>
        <span>JPHB blade mr...png</span>
        <span>Show All</span>
    </div>

</body>
</html>
```
FILE: styles.css
```css
/* --- BASE --- */
* { box-sizing: border-box; }
body {
    margin: 0;
    height: 100vh;
    display: flex;
    flex-direction: column;
    overflow: hidden;
    background: #b4b4b6;
    color: #262626;
    font-family: Inter, "Liberation Sans", sans-serif;
    font-size: 10px;
}
button, input, select { font: inherit; color: inherit; margin: 0; }
button { padding: 0; border: 0; background: none; }
svg { display: block; flex: none; }
a { color: inherit; text-decoration: none; }
h1, h2, p { margin: 0; font-weight: 400; }
.defs { position: absolute; }

/* --- TITLE BAR --- */
.desktop-edge { height: 2px; background: #8fa3c0; border-bottom: 1px solid #3d5578; flex: none; }
.titlebar {
    flex: none;
    height: 50px;
    background: linear-gradient(#e6e6e6, #cbcbcb);
    border-bottom: 1px solid #adadad;
}
.title-row { display: grid; grid-template-columns: 1fr auto 1fr; align-items: center; height: 20px; padding-left: 5px; }
.lights { display: flex; gap: 7px; }
.light { width: 11px; height: 11px; border-radius: 50%; }
.close { background: radial-gradient(circle, #5c0a05 0 2px, #ed6a5e 2px); }
.minimize { background: #f5bf4f; }
.zoom { background: #61c554; }
.title { font-size: 12px; color: #484848; }
.title span { color: #999; }

.toolbar { display: flex; align-items: center; height: 26px; padding-left: 10px; }
.modes { display: flex; gap: 9px; margin-left: 48px; }
.mode { height: 14px; padding: 0 9px; border-radius: 3px; font-size: 11px; line-height: 14px; font-weight: 700; color: #4c4c4c; }
.mode.on { background: #858585; color: #fff; }
.current { display: flex; align-items: center; gap: 8px; margin-left: auto; }
.layer-field {
    display: flex;
    align-items: center;
    width: 172px;
    height: 17px;
    padding: 0 4px;
    border-radius: 4px;
    background: #f5f5f5;
    color: #444;
}
.swatch { width: 13px; height: 13px; background: #000; }
.layer-name { flex: 1; text-align: center; }
.toolbar-end { display: flex; justify-content: flex-end; width: 295px; padding-right: 12px; }

/* --- LAYOUT --- */
.workspace { flex: 1; min-height: 0; display: grid; grid-template-columns: 179px 1fr 291px; }
.bar {
    flex: none;
    height: 24px;
    background: linear-gradient(#f6f6f6, #e2e2e2);
    border-bottom: 1px solid #c4c4c4;
}
.left, .center, .right { display: flex; flex-direction: column; min-width: 0; min-height: 0; background: #ececec; }
.left { border-right: 1px solid #8e8e8e; }

/* --- LEFT SIDEBAR --- */
.command { flex: none; padding: 9px 8px 0 5px; }
.command input {
    display: block;
    width: 100%;
    height: 19px;
    padding: 2px 3px 0;
    border: 1px solid #c6c6c6;
    background: #fff;
    font-size: 12px;
}
.command input::placeholder { color: #bbb; }
.tools {
    flex: none;
    display: grid;
    grid-template: repeat(9, 1fr) / repeat(6, 1fr);
    width: 160px;
    height: 240px;
    margin-top: 8px;
}
.tools svg { width: 100%; height: 100%; overflow: visible; }
.ln { fill: none; stroke: #333; stroke-width: 3; }
.snaps { height: 250px; margin-top: auto; border-top: 1px solid #8a8a8a; overflow: hidden; }
.snap-list { display: flex; flex-direction: column; margin-top: -10px; padding-left: 16px; }
.snap-list label, .shadows label { display: flex; align-items: center; gap: 5px; height: 16px; }
.snap-list .off { color: #b0b0b0; }
.snap-list .disable-all { margin-top: 16px; }

input[type="checkbox"] {
    appearance: none;
    display: grid;
    place-content: center;
    width: 10px;
    height: 10px;
    border-radius: 2px;
    background: #fff;
    box-shadow: 0 0 1px #777;
}
input[type="checkbox"]:disabled { background: #f4f4f4; box-shadow: 0 0 1px #aaa; }
input[type="checkbox"]:checked { background: #3f80f0; box-shadow: none; }
input[type="checkbox"]:checked::before {
    content: "";
    width: 3px;
    height: 6px;
    margin-bottom: 1px;
    border: solid #fff;
    border-width: 0 1px 1px 0;
    transform: rotate(40deg);
}

/* --- VIEWPORT --- */
.viewbar { display: flex; align-items: center; padding: 0 10px 0 7px; font-size: 11px; color: #444; border-bottom-color: #909090; }
.viewbar button + button { margin-left: 9px; }
.sep { width: 1px; height: 12px; margin: 0 17px 0 18px; background: #888; }
.viewbar button + .sep { margin-left: 9px; }
.viewbar .on { color: #2f7bf0; }
.layouts { margin-left: auto; color: #808080; }
.viewport { position: relative; flex: 1; min-height: 0; overflow: hidden; background: #9ca3ab; }
.drawing { width: 100%; height: 100%; }
.view-label {
    position: absolute;
    top: 1px;
    left: 0;
    padding: 0 5px;
    background: #2b5c92;
    color: #fff;
    font-size: 11px;
    line-height: 18px;
    font-weight: 600;
}
.curve { fill: none; stroke: #1c1f22; stroke-width: 1; }
.slot { fill: #9ca3ab; stroke: #fff; }
.fold { fill: none; stroke-width: 1.3; }
.fold.dark { stroke: #1c1f22; stroke-dasharray: 12 12; }
.fold.light { stroke: #fff; stroke-dasharray: 11 13; }
.dim { font: 17px "Liberation Sans", Arial, sans-serif; text-anchor: middle; fill: #0c0c0c; }
.axis { font: 11px "Liberation Sans", Arial, sans-serif; text-anchor: middle; fill: #5c646c; }

/* --- RIGHT SIDEBAR --- */
.right { border-left: 1px solid #6a6a6a; }
.tabs { display: flex; align-items: center; justify-content: space-between; padding: 0 37px 0 38px; padding-right: 38px; }
.tabs button { width: 21px; color: #666; }
.tabs svg { width: 21px; height: 21px; fill: none; stroke: currentColor; stroke-width: 3; }
.tabs .on { color: #4a8cf0; }

.layers { flex: 1; min-height: 0; background: #fff; border-bottom: 1px solid #d0d0d0; }
.layers table { width: 100%; table-layout: fixed; border-collapse: collapse; }
.c-name { width: 65px; }
.c-s { width: 21px; }
.c-m { width: 23px; }
.c-line { width: 51px; }
.layers th { height: 20px; padding: 0 0 0 4px; border-bottom: 1px solid #ddd; text-align: left; font-weight: 400; white-space: nowrap; }
.layers th:first-child { padding-left: 3px; }
.layers th + th { background: linear-gradient(#ddd, #ddd) 0 100% / 1px 18px no-repeat; }
.layers td { height: 15px; padding: 0; line-height: 15px; white-space: nowrap; }
.layers td:first-child { padding-left: 17px; }
.layers input {
    appearance: none;
    display: block;
    width: 12px;
    height: 12px;
    margin-left: 5px;
    border: 1px solid #ccc;
    border-radius: 50%;
    background: #fff;
}
.layers input:checked { border: 4px solid #3f80f0; }
.ic { width: 14px; height: 14px; margin-left: 4px; }
.current-row .ic { opacity: .35; }
.chip { display: block; width: 12px; height: 12px; margin-left: 5px; border: 1px solid #111; }
.ball { width: 10px; height: 10px; margin-left: 5px; }
.diamond { display: block; width: 10px; height: 10px; margin-left: 5px; border: 1px solid #111; transform: rotate(45deg); }
.pick { display: flex; align-items: center; justify-content: space-between; width: 42px; margin-left: 6px; line-height: 15px; }
td:last-child .pick { width: 37px; }
.pick svg { width: 7px; height: 11px; color: #444; }
.black { background: #000; }
.red { background: #ee4022; }
.purple { background: #8250cc; }
.blue { background: #0a3cf0; }
.green { background: #378a28; }
.white { background: #fff; }

.layer-actions { flex: none; display: flex; align-items: center; gap: 16px; height: 29px; padding-left: 16px; }
.pair { display: flex; border-radius: 3px; background: #fff; box-shadow: 0 0 1px #999; }
.pair button { display: grid; place-items: center; width: 20px; height: 14px; }
.pair button + button { border-left: 1px solid #ddd; }
.gear { display: flex; align-items: center; justify-content: center; gap: 8px; width: 30px; height: 14px; border-radius: 3px; background: #fff; box-shadow: 0 0 1px #999; }

.props { flex: none; border-top: 1px solid #777; }
.props h2 { display: flex; align-items: center; gap: 8px; height: 20px; padding-left: 4px; font-size: 12px; color: #333; }
.form {
    display: grid;
    grid-template-columns: 71px 1fr;
    grid-auto-rows: 23px;
    align-items: center;
    column-gap: 8px;
    margin-top: 4px;
    padding-right: 7px;
}
.lbl { text-align: right; white-space: nowrap; }
.row { display: flex; align-items: center; gap: 8px; }
.form input { width: 100%; height: 16px; padding: 0 4px; border: 1px solid #c6c6c6; background: #fff; }
.select { position: relative; flex: 1; display: flex; }
.select select {
    appearance: none;
    width: 100%;
    height: 15px;
    padding: 0 18px 0 7px;
    border: 0;
    border-radius: 3px;
    background: linear-gradient(#5f9bf5, #2a6dea) right / 13px 100% no-repeat #fff;
    box-shadow: 0 0 1px #999;
}
.select svg { position: absolute; top: 1px; right: 2px; width: 9px; height: 13px; color: #fff; pointer-events: none; }
.well { width: 30px; height: 15px; border: 1px solid #777; background: #000; }
.shadows { padding: 0 0 14px 95px; }
.props .details { border-top: 1px solid #d4d4d4; height: 23px; }
.object-id { height: 12px; padding-left: 8px; line-height: 12px; white-space: nowrap; }
.props-footer { display: flex; align-items: center; justify-content: space-between; height: 27px; padding: 0 19px 0 7px; border-top: 1px solid #d4d4d4; }
.help, .match { background: #fff; box-shadow: 0 0 2px #999; }
.help { width: 13px; height: 13px; border-radius: 50%; line-height: 13px; }
.match { width: 42px; height: 14px; border-radius: 3px; line-height: 14px; }

/* --- STATUS BAR --- */
.status {
    flex: none;
    display: flex;
    align-items: center;
    height: 24px;
    padding: 2px 0 0 3px;
    border-top: 1px solid #bbb;
    border-radius: 0 0 6px 0;
    background: linear-gradient(#dcdcdc, #cecece);
}
.prompt { margin-left: 1px; }
.units { margin-left: auto; }
.plane { position: relative; margin: 0 12px 0 14px; }
.plane select { appearance: none; display: block; width: 62px; height: 14px; padding: 0 5px; border: 1px solid #999; border-radius: 3px; background: none; }
.plane svg { position: absolute; top: 1px; right: 3px; width: 8px; height: 12px; color: #777; }
.coord { width: 75px; }
.coord:last-child { width: 165px; }

.downloads {
    flex: none;
    display: grid;
    grid-template-columns: repeat(6, 1fr);
    height: 4px;
    padding-left: 56px;
    overflow: hidden;
    background: #b4b4b6;
    font-size: 11px;
    line-height: 12px;
    white-space: nowrap;
}
.downloads span:last-child { justify-self: end; padding-right: 56px; }
```
